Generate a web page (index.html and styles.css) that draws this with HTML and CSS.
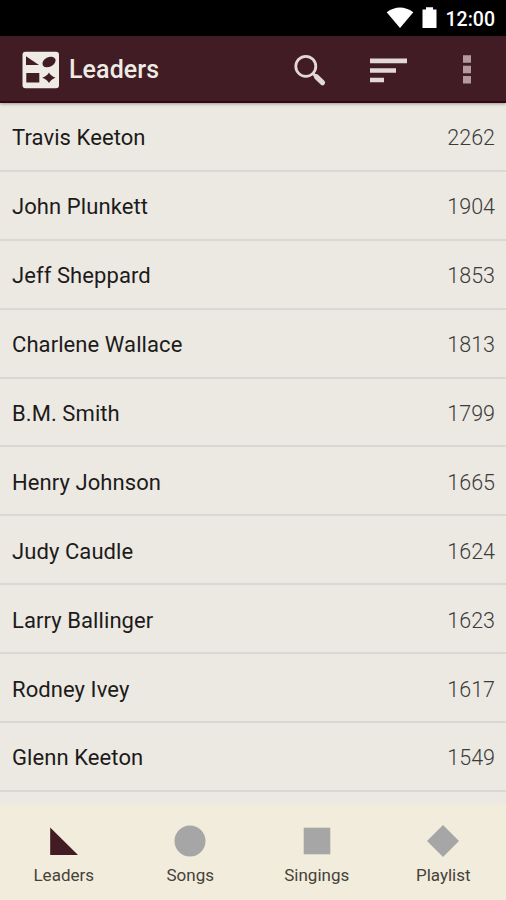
FILE: index.html
```html
<!DOCTYPE html>
<html lang="en">
<head>
    <meta charset="UTF-8">
    <meta name="viewport" content="width=device-width, initial-scale=1.0">
    <title>Leaders</title>
    <link rel="stylesheet" href="styles.css">
</head>
<body>
    <div class="app">
        <div class="status-bar">
            <svg class="wifi" width="28" height="22" viewBox="0 0 28 22">
                <path d="M14 21 L0.7 5.2 Q14 -4 27.3 5.2 Z" fill="#fff"/>
            </svg>
            <svg class="battery" width="15" height="22" viewBox="0 0 15 22">
                <path d="M0.5 2.5 H4 V0.3 H11 V2.5 H14.5 V21 H0.5 Z" fill="#fff"/>
            </svg>
            <span class="clock">12:00</span>
        </div>

        <header class="toolbar">
            <svg class="logo" width="38" height="38" viewBox="0 0 38 38">
                <rect x="0.5" y="0.8" width="36.5" height="36.5" rx="3" fill="#eeebe5"/>
                <g fill="#421c24">
                    <path d="M4 5.3 L17 14 H4 Z"/>
                    <ellipse cx="27" cy="11" rx="7" ry="4.8" transform="rotate(-27 27 11)"/>
                    <rect x="4.3" y="22" width="13" height="9.5"/>
                    <path d="M27 21.5 Q28.8 25 33.5 26.7 Q28.8 28.5 27 32 Q25.2 28.5 20.2 26.7 Q25.2 25 27 21.5 Z"/>
                </g>
            </svg>
            <h1 class="title">Leaders</h1>
            <div class="actions">
                <svg width="34" height="34" viewBox="0 0 34 34">
                    <circle cx="12.8" cy="13.3" r="10" fill="none" stroke="#e3d8d9" stroke-width="2.8"/>
                    <path d="M20 20.5 L23.5 24" stroke="#e3d8d9" stroke-width="3"/>
                    <path d="M23.5 23.8 L29.5 29.7" stroke="#e3d8d9" stroke-width="5.2" stroke-linecap="round"/>
                </svg>
                <svg width="37" height="26" viewBox="0 0 37 26">
                    <path d="M0 1.5 H37 V6.2 H0 Z M0 11.3 H26 V15.8 H0 Z M0 20.8 H14 V25.3 H0 Z" fill="#e3d8d9"/>
                </svg>
                <svg width="8" height="29" viewBox="0 0 8 29">
                    <path d="M0 0.2 H8 V7.7 H0 Z M0 10.7 H8 V18.2 H0 Z M0 21 H8 V28.5 H0 Z" fill="#b49aa0"/>
                </svg>
            </div>
        </header>

        <ul class="list">
            <li class="row"><span class="name">Travis Keeton</span><span class="count">2262</span></li>
            <li class="row"><span class="name">John Plunkett</span><span class="count">1904</span></li>
            <li class="row"><span class="name">Jeff Sheppard</span><span class="count">1853</span></li>
            <li class="row"><span class="name">Charlene Wallace</span><span class="count">1813</span></li>
            <li class="row"><span class="name">B.M. Smith</span><span class="count">1799</span></li>
            <li class="row"><span class="name">Henry Johnson</span><span class="count">1665</span></li>
            <li class="row"><span class="name">Judy Caudle</span><span class="count">1624</span></li>
            <li class="row"><span class="name">Larry Ballinger</span><span class="count">1623</span></li>
            <li class="row"><span class="name">Rodney Ivey</span><span class="count">1617</span></li>
            <li class="row"><span class="name">Glenn Keeton</span><span class="count">1549</span></li>
        </ul>

        <nav class="tabs">
            <a class="tab active">
                <svg width="32" height="32" viewBox="0 0 32 32"><path d="M2.2 2.5 L30 30 H2.2 Z"/></svg>
                <span>Leaders</span>
            </a>
            <a class="tab">
                <svg width="32" height="32" viewBox="0 0 32 32"><circle cx="16" cy="16" r="15.5"/></svg>
                <span>Songs</span>
            </a>
            <a class="tab">
                <svg width="32" height="32" viewBox="0 0 32 32"><rect x="2.7" y="2.7" width="26.6" height="26.6"/></svg>
                <span>Singings</span>
            </a>
            <a class="tab">
                <svg width="32" height="32" viewBox="0 0 32 32"><path d="M16 0 L32 16 L16 32 L0 16 Z"/></svg>
                <span>Playlist</span>
            </a>
        </nav>
    </div>
</body>
</html>
```

FILE: styles.css
```css
* {
    box-sizing: border-box;
}

body {
    margin: 0;
    font-family: Roboto, sans-serif;
    background-color: #ece9e3;
    color: #1c1b1a;
}

.app {
    display: flex;
    flex-direction: column;
    height: 900px;
    overflow: hidden;
}

/* Status bar */
.status-bar {
    display: flex;
    flex: none;
    justify-content: flex-end;
    align-items: center;
    height: 36px;
    padding-right: 11px;
    background-color: #000;
    color: #fff;
}

.battery {
    margin-left: 8px;
}

.clock {
    margin-left: 9px;
    padding-top: 2px;
    font-size: 19.5px;
    font-weight: 500;
}

/* Toolbar */
.toolbar {
    display: flex;
    flex: none;
    align-items: center;
    height: 67px;
    padding: 2px 35px 0 22px;
    background-color: #421c24;
    border-bottom: 2px solid #310710;
    box-shadow: 0 1px 3px rgba(0, 0, 0, 0.35);
}

.title {
    margin: 0 0 0 9px;
    color: #eeebe5;
    font-size: 25px;
    font-weight: 500;
    letter-spacing: 0.1px;
}

.actions {
    display: flex;
    align-items: center;
    margin-left: auto;
}

.actions svg + svg {
    margin-left: 43px;
}

.actions svg:last-child {
    margin-left: 56px;
}

/* Leaders list */
.list {
    flex: 1;
    margin: 0;
    padding: 0;
    list-style: none;
}

.row {
    display: flex;
    justify-content: space-between;
    align-items: center;
    height: 68.9px;
    padding: 3px 11px 0 12px;
    border-bottom: 2px solid #dbd8d3;
    font-size: 22px;
}

.name {
    letter-spacing: 0.08px;
}

.count {
    color: #3c3b39;
    font-size: 21.5px;
    font-weight: 300;
}

/* Bottom tabs */
.tabs {
    display: flex;
    flex: none;
    height: 95px;
    background-color: #f2ecdc;
    box-shadow: 0 -1px 2px #f2ecdc;
}

.tab {
    display: flex;
    flex: 1;
    flex-direction: column;
    align-items: center;
    padding: 20px 0 0 1px;
    color: #45423b;
    font-size: 17px;
}

.tab svg {
    fill: #a6a6a6;
}

.tab span {
    margin-top: 8px;
}

.tab.active svg {
    fill: #421c24;
}
```
